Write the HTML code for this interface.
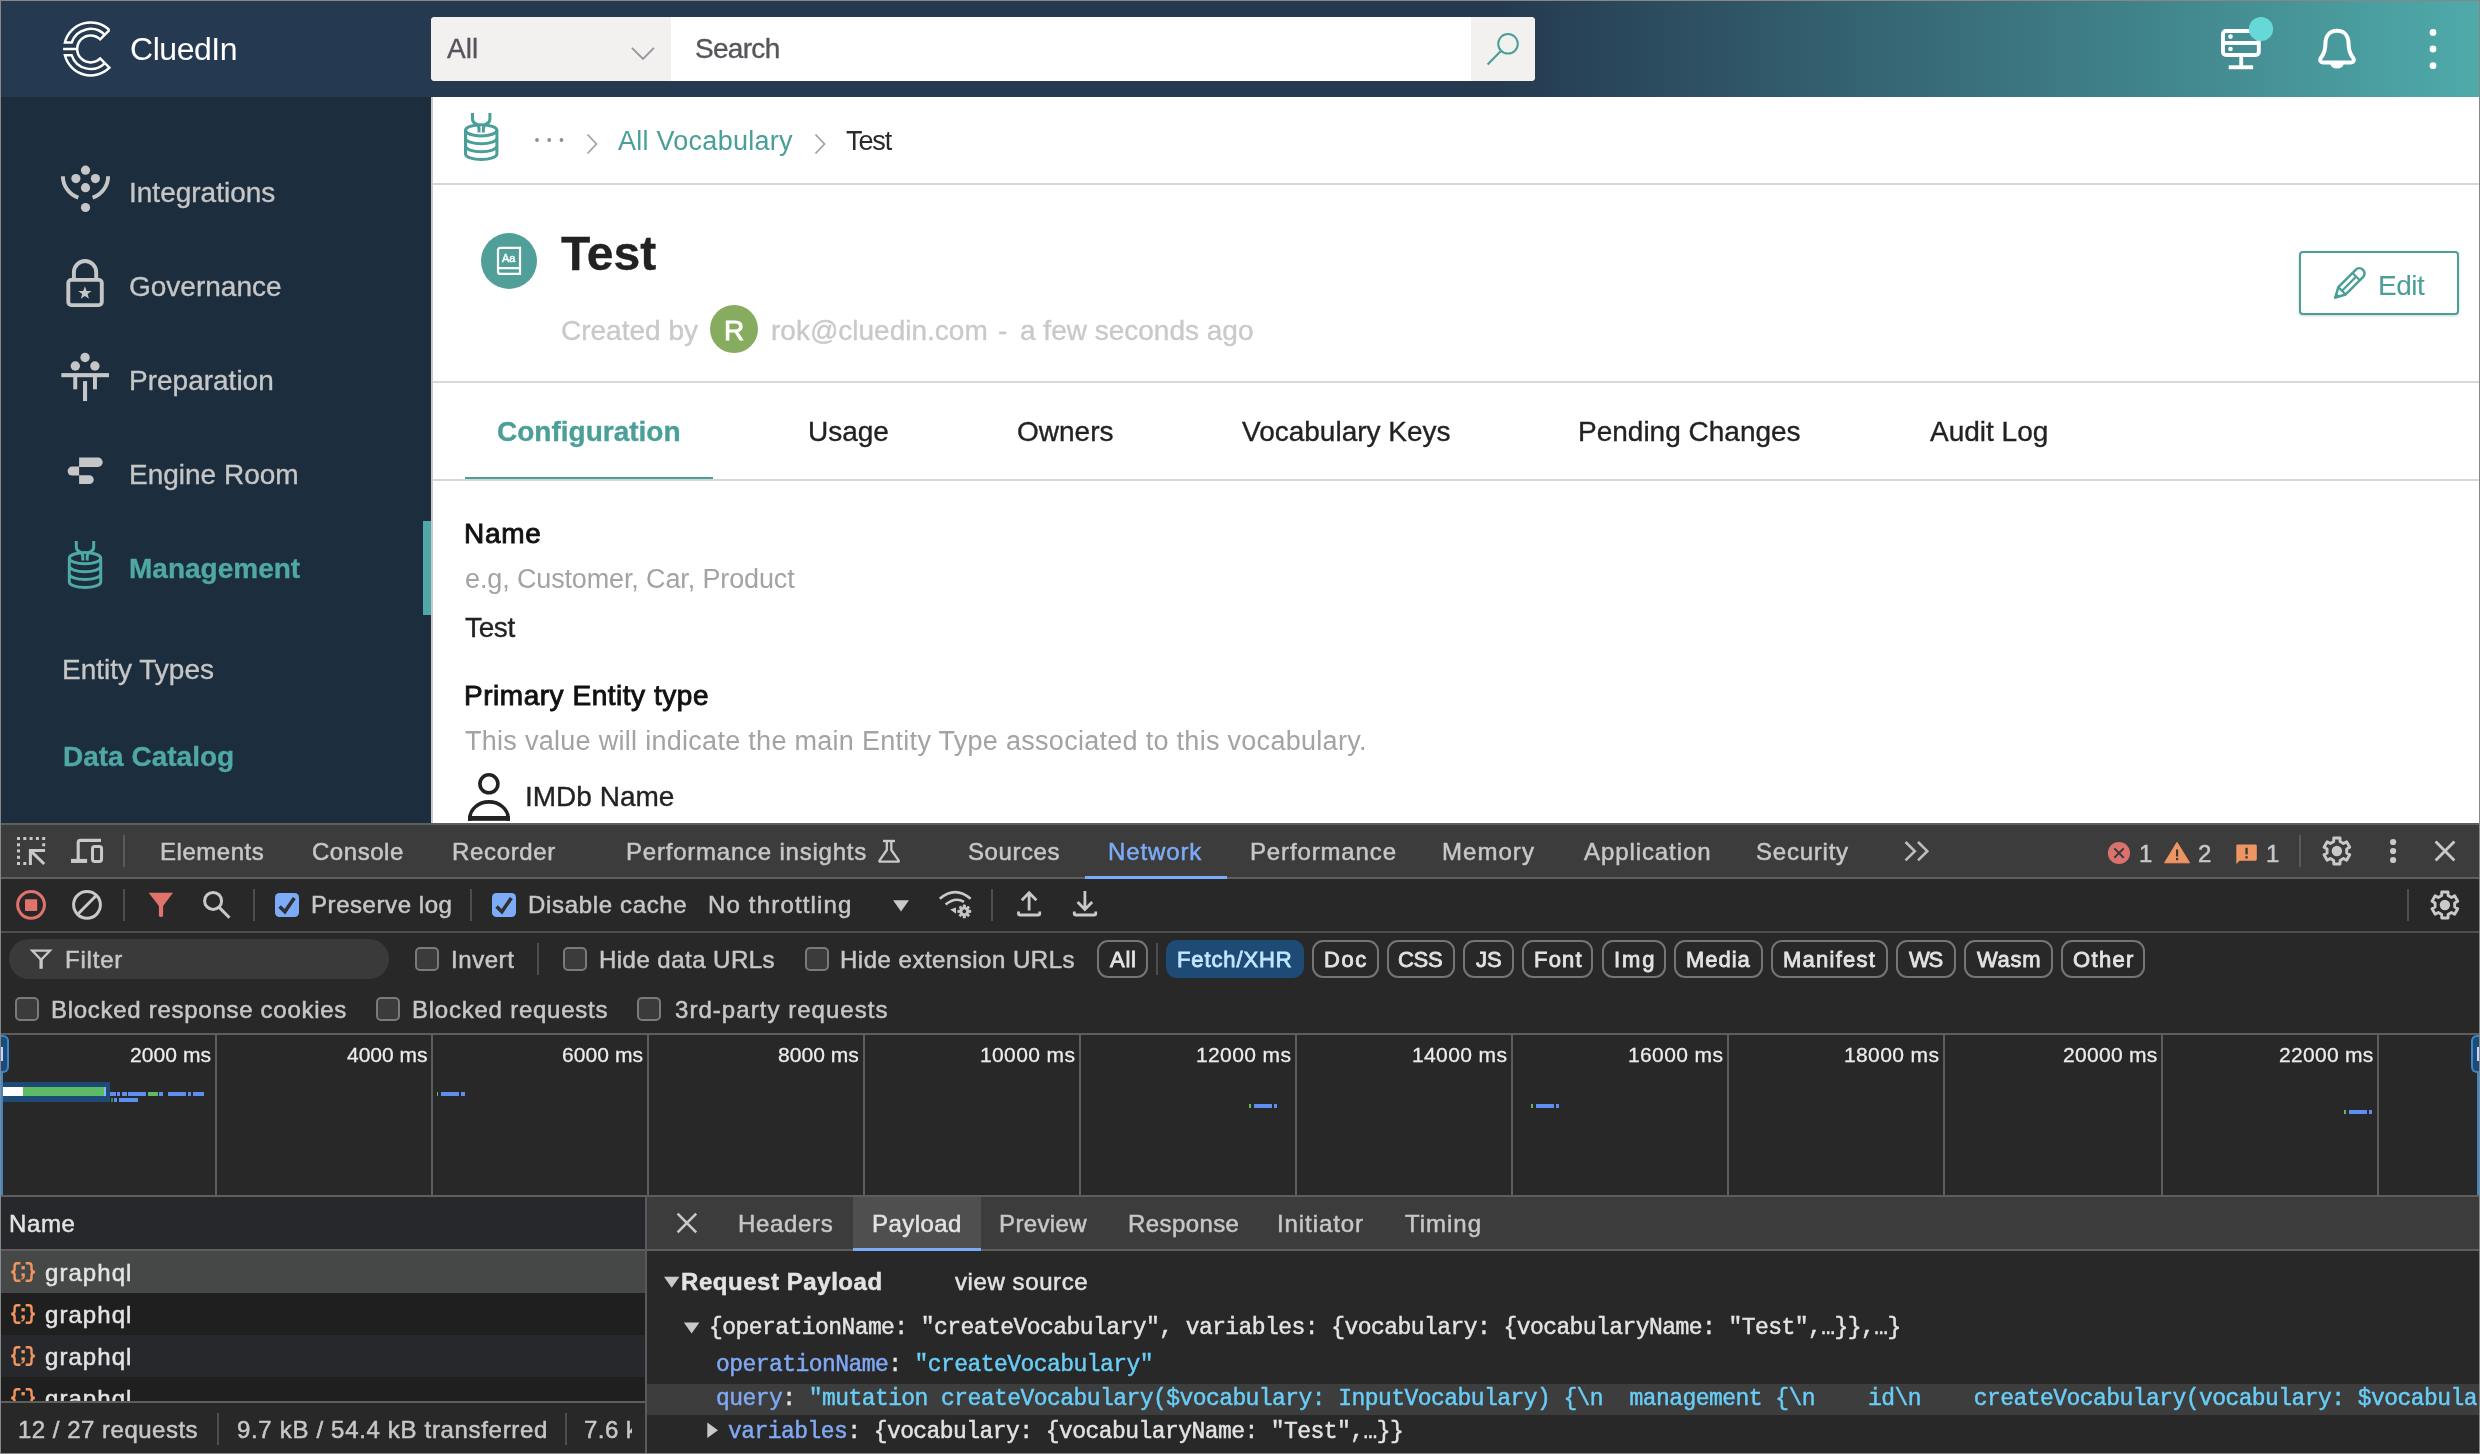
<!DOCTYPE html>
<html><head><meta charset="utf-8"><title>CluedIn</title>
<style>
html,body{margin:0;padding:0;background:#282828;}
body{width:2480px;height:1454px;position:relative;overflow:hidden;font-family:"Liberation Sans",sans-serif;}
.t{position:absolute;white-space:pre;margin:0;padding:0;will-change:transform;}
.b{position:absolute;box-sizing:border-box;}
svg{position:absolute;overflow:visible;}
</style></head><body>
<div class="b" style="left:0px;top:0px;width:2480px;height:1454px;background:#8a8684;"></div>
<div class="b" style="left:0px;top:823px;width:2480px;height:631px;background:#888888;"></div>
<div class="b" style="left:1px;top:1px;width:2478px;height:96px;background:linear-gradient(90deg,#253a50 0,#253a50 1500px,#4faaaa 2478px);"></div>
<div class="b" style="left:1px;top:97px;width:430px;height:726px;background:#1c2d3d;"></div>
<div class="b" style="left:431px;top:97px;width:2048px;height:726px;background:#fff;"></div>
<div class="b" style="left:431px;top:97px;width:2px;height:726px;background:#c9c9c9;"></div>
<div class="b" style="left:431px;top:17px;width:1104px;height:64px;background:#fff;border-radius:4px;overflow:hidden;"></div>
<div class="b" style="left:431px;top:17px;width:240px;height:64px;background:#f2f1f0;border-radius:4px 0 0 4px;"></div>
<div class="b" style="left:1471px;top:17px;width:64px;height:64px;background:#f2f1f0;border-radius:0 4px 4px 0;"></div>
<div class="t " style="left:129.50px;top:33.00px;font-size:32px;line-height:32px;color:#fff;font-family:'Liberation Sans',sans-serif;letter-spacing:-0.457px;-webkit-text-stroke:0.01px #fff;">CluedIn</div>
<div class="t " style="left:446.60px;top:35.00px;font-size:28px;line-height:28px;color:#55555a;font-family:'Liberation Sans',sans-serif;-webkit-text-stroke:0.35px #55555a;">All</div>
<div class="t " style="left:695.04px;top:35.00px;font-size:28px;line-height:28px;color:#55555a;font-family:'Liberation Sans',sans-serif;letter-spacing:-0.696px;-webkit-text-stroke:0.35px #55555a;">Search</div>
<div class="b" style="left:433px;top:183px;width:2046px;height:2px;background:#d6d8d2;"></div>
<div class="t " style="left:618.00px;top:128.00px;font-size:27px;line-height:27px;color:#4a9f98;font-family:'Liberation Sans',sans-serif;letter-spacing:0.261px;-webkit-text-stroke:0.01px #4a9f98;">All Vocabulary</div>
<div class="t " style="left:845.96px;top:128.00px;font-size:27px;line-height:27px;color:#2a2a2a;font-family:'Liberation Sans',sans-serif;letter-spacing:-1.101px;-webkit-text-stroke:0.01px #2a2a2a;">Test</div>
<div class="b" style="left:433px;top:381px;width:2046px;height:2px;background:#d6d8d2;"></div>
<div class="b" style="left:481px;top:233px;width:56px;height:56px;background:#519f99;border-radius:50%;"></div>
<div class="t " style="left:561.04px;top:230.00px;font-size:48px;line-height:48px;color:#222;font-family:'Liberation Sans',sans-serif;font-weight:700;-webkit-text-stroke:0.35px #222;">Test</div>
<div class="t " style="left:561.43px;top:317.00px;font-size:28px;line-height:28px;color:#c9c9c9;font-family:'Liberation Sans',sans-serif;-webkit-text-stroke:0.35px #c9c9c9;">Created by</div>
<div class="b" style="left:710px;top:305px;width:48px;height:48px;background:#87ac5f;border-radius:50%;"></div>
<div class="t " style="left:724.16px;top:317.00px;font-size:28px;line-height:28px;color:#fff;font-family:'Liberation Sans',sans-serif;-webkit-text-stroke:0.9px #fff;">R</div>
<div class="t " style="left:770.69px;top:317.00px;font-size:28px;line-height:28px;color:#c9c9c9;font-family:'Liberation Sans',sans-serif;-webkit-text-stroke:0.35px #c9c9c9;">rok@cluedin.com</div>
<div class="t " style="left:997.56px;top:317.00px;font-size:28px;line-height:28px;color:#c9c9c9;font-family:'Liberation Sans',sans-serif;-webkit-text-stroke:0.35px #c9c9c9;">-</div>
<div class="t " style="left:1020.49px;top:317.00px;font-size:28px;line-height:28px;color:#c9c9c9;font-family:'Liberation Sans',sans-serif;-webkit-text-stroke:0.35px #c9c9c9;">a few seconds ago</div>
<div class="b" style="left:2299px;top:251px;width:160px;height:64px;background:#fff;border:2px solid #4a9f98;border-radius:4px;box-shadow:0 1px 3px rgba(0,0,0,.18);"></div>
<div class="t " style="left:2377.76px;top:272.00px;font-size:28px;line-height:28px;color:#4a9f98;font-family:'Liberation Sans',sans-serif;letter-spacing:-0.517px;-webkit-text-stroke:0.01px #4a9f98;">Edit</div>
<div class="b" style="left:433px;top:479px;width:2046px;height:2px;background:#d6d8d2;"></div>
<div class="b" style="left:465px;top:477px;width:248px;height:2px;background:#4a9f98;"></div>
<div class="t " style="left:497.29px;top:418.00px;font-size:28px;line-height:28px;color:#4a9f98;font-family:'Liberation Sans',sans-serif;font-weight:700;-webkit-text-stroke:0.35px #4a9f98;">Configuration</div>
<div class="t " style="left:808.08px;top:418.00px;font-size:28px;line-height:28px;color:#222;font-family:'Liberation Sans',sans-serif;-webkit-text-stroke:0.35px #222;">Usage</div>
<div class="t " style="left:1017.13px;top:418.00px;font-size:28px;line-height:28px;color:#222;font-family:'Liberation Sans',sans-serif;-webkit-text-stroke:0.35px #222;">Owners</div>
<div class="t " style="left:1242.40px;top:418.00px;font-size:28px;line-height:28px;color:#222;font-family:'Liberation Sans',sans-serif;-webkit-text-stroke:0.35px #222;">Vocabulary Keys</div>
<div class="t " style="left:1578.07px;top:418.00px;font-size:28px;line-height:28px;color:#222;font-family:'Liberation Sans',sans-serif;-webkit-text-stroke:0.35px #222;">Pending Changes</div>
<div class="t " style="left:1930.22px;top:418.00px;font-size:28px;line-height:28px;color:#222;font-family:'Liberation Sans',sans-serif;-webkit-text-stroke:0.35px #222;">Audit Log</div>
<div class="t " style="left:463.76px;top:520.00px;font-size:28px;line-height:28px;color:#111;font-family:'Liberation Sans',sans-serif;letter-spacing:0.747px;-webkit-text-stroke:0.9px #111;">Name</div>
<div class="t " style="left:464.85px;top:566.00px;font-size:27px;line-height:27px;color:#a3a3a3;font-family:'Liberation Sans',sans-serif;letter-spacing:-0.131px;-webkit-text-stroke:0.01px #a3a3a3;">e.g, Customer, Car, Product</div>
<div class="t " style="left:465.44px;top:614.00px;font-size:28px;line-height:28px;color:#222;font-family:'Liberation Sans',sans-serif;letter-spacing:-0.370px;-webkit-text-stroke:0.35px #222;">Test</div>
<div class="t " style="left:463.76px;top:682.00px;font-size:28px;line-height:28px;color:#111;font-family:'Liberation Sans',sans-serif;letter-spacing:0.528px;-webkit-text-stroke:0.9px #111;">Primary Entity type</div>
<div class="t " style="left:465.46px;top:728.00px;font-size:27px;line-height:27px;color:#a3a3a3;font-family:'Liberation Sans',sans-serif;letter-spacing:0.287px;-webkit-text-stroke:0.01px #a3a3a3;">This value will indicate the main Entity Type associated to this vocabulary.</div>
<div class="t " style="left:525.23px;top:783.00px;font-size:28px;line-height:28px;color:#222;font-family:'Liberation Sans',sans-serif;-webkit-text-stroke:0.35px #222;">IMDb Name</div>
<div class="t " style="left:128.58px;top:179.00px;font-size:28px;line-height:28px;color:#c6c6c6;font-family:'Liberation Sans',sans-serif;-webkit-text-stroke:0.35px #c6c6c6;">Integrations</div>
<div class="t " style="left:129.13px;top:273.00px;font-size:28px;line-height:28px;color:#c6c6c6;font-family:'Liberation Sans',sans-serif;-webkit-text-stroke:0.35px #c6c6c6;">Governance</div>
<div class="t " style="left:128.88px;top:367.00px;font-size:28px;line-height:28px;color:#c6c6c6;font-family:'Liberation Sans',sans-serif;-webkit-text-stroke:0.35px #c6c6c6;">Preparation</div>
<div class="t " style="left:128.95px;top:461.00px;font-size:28px;line-height:28px;color:#c6c6c6;font-family:'Liberation Sans',sans-serif;-webkit-text-stroke:0.35px #c6c6c6;">Engine Room</div>
<div class="t " style="left:128.66px;top:555.00px;font-size:28px;line-height:28px;color:#4fa8a5;font-family:'Liberation Sans',sans-serif;font-weight:700;-webkit-text-stroke:0.35px #4fa8a5;">Management</div>
<div class="b" style="left:423px;top:521px;width:8px;height:94px;background:#4fa8a5;"></div>
<div class="t " style="left:62.35px;top:656.00px;font-size:28px;line-height:28px;color:#c6c6c6;font-family:'Liberation Sans',sans-serif;-webkit-text-stroke:0.35px #c6c6c6;">Entity Types</div>
<div class="t " style="left:63.42px;top:743.00px;font-size:28px;line-height:28px;color:#4fa8a5;font-family:'Liberation Sans',sans-serif;font-weight:700;-webkit-text-stroke:0.35px #4fa8a5;">Data Catalog</div>
<div class="b" style="left:1px;top:823px;width:2478px;height:2px;background:#5e5e5e;"></div>
<div class="b" style="left:1px;top:825px;width:2478px;height:52px;background:#3c3c3c;"></div>
<div class="b" style="left:1px;top:877px;width:2478px;height:2px;background:#5e5e5e;"></div>
<div class="b" style="left:1px;top:879px;width:2478px;height:52px;background:#282828;"></div>
<div class="b" style="left:1px;top:931px;width:2478px;height:2px;background:#4e4e4e;"></div>
<div class="b" style="left:1px;top:933px;width:2478px;height:100px;background:#282828;"></div>
<div class="b" style="left:1px;top:1033px;width:2478px;height:2px;background:#5e5e5e;"></div>
<div class="b" style="left:1px;top:1035px;width:2478px;height:160px;background:#282828;"></div>
<div class="b" style="left:1px;top:1195px;width:2478px;height:2px;background:#5e5e5e;"></div>
<div class="t " style="left:159.58px;top:840.00px;font-size:24px;line-height:24px;color:#c7c7c7;font-family:'Liberation Sans',sans-serif;letter-spacing:0.534px;-webkit-text-stroke:0.5px #c7c7c7;">Elements</div>
<div class="t " style="left:312.30px;top:840.00px;font-size:24px;line-height:24px;color:#c7c7c7;font-family:'Liberation Sans',sans-serif;letter-spacing:0.533px;-webkit-text-stroke:0.5px #c7c7c7;">Console</div>
<div class="t " style="left:451.58px;top:840.00px;font-size:24px;line-height:24px;color:#c7c7c7;font-family:'Liberation Sans',sans-serif;letter-spacing:0.654px;-webkit-text-stroke:0.5px #c7c7c7;">Recorder</div>
<div class="t " style="left:625.58px;top:840.00px;font-size:24px;line-height:24px;color:#c7c7c7;font-family:'Liberation Sans',sans-serif;letter-spacing:0.781px;-webkit-text-stroke:0.5px #c7c7c7;">Performance insights</div>
<div class="t " style="left:968.42px;top:840.00px;font-size:24px;line-height:24px;color:#c7c7c7;font-family:'Liberation Sans',sans-serif;letter-spacing:0.567px;-webkit-text-stroke:0.5px #c7c7c7;">Sources</div>
<div class="t " style="left:1249.58px;top:840.00px;font-size:24px;line-height:24px;color:#c7c7c7;font-family:'Liberation Sans',sans-serif;letter-spacing:0.860px;-webkit-text-stroke:0.5px #c7c7c7;">Performance</div>
<div class="t " style="left:1441.58px;top:840.00px;font-size:24px;line-height:24px;color:#c7c7c7;font-family:'Liberation Sans',sans-serif;letter-spacing:1.044px;-webkit-text-stroke:0.5px #c7c7c7;">Memory</div>
<div class="t " style="left:1583.50px;top:840.00px;font-size:24px;line-height:24px;color:#c7c7c7;font-family:'Liberation Sans',sans-serif;letter-spacing:0.914px;-webkit-text-stroke:0.5px #c7c7c7;">Application</div>
<div class="t " style="left:1756.42px;top:840.00px;font-size:24px;line-height:24px;color:#c7c7c7;font-family:'Liberation Sans',sans-serif;letter-spacing:0.769px;-webkit-text-stroke:0.5px #c7c7c7;">Security</div>
<div class="t " style="left:1108.08px;top:840.00px;font-size:24px;line-height:24px;color:#7cacf8;font-family:'Liberation Sans',sans-serif;letter-spacing:0.890px;-webkit-text-stroke:0.5px #7cacf8;">Network</div>
<div class="b" style="left:1085px;top:876px;width:142px;height:3px;background:#7cacf8;"></div>
<div class="b" style="left:123px;top:835px;width:2px;height:32px;background:#5a5a5a;"></div>
<div class="b" style="left:2299px;top:835px;width:2px;height:32px;background:#5a5a5a;"></div>
<div class="t " style="left:2139.30px;top:842.00px;font-size:24px;line-height:24px;color:#c7c7c7;font-family:'Liberation Sans',sans-serif;-webkit-text-stroke:0.5px #c7c7c7;">1</div>
<div class="t " style="left:2198.00px;top:842.00px;font-size:24px;line-height:24px;color:#c7c7c7;font-family:'Liberation Sans',sans-serif;-webkit-text-stroke:0.5px #c7c7c7;">2</div>
<div class="t " style="left:2265.70px;top:842.00px;font-size:24px;line-height:24px;color:#c7c7c7;font-family:'Liberation Sans',sans-serif;-webkit-text-stroke:0.5px #c7c7c7;">1</div>
<div class="t " style="left:311.08px;top:893.00px;font-size:24px;line-height:24px;color:#c7c7c7;font-family:'Liberation Sans',sans-serif;letter-spacing:0.565px;-webkit-text-stroke:0.5px #c7c7c7;">Preserve log</div>
<div class="t " style="left:527.58px;top:893.00px;font-size:24px;line-height:24px;color:#c7c7c7;font-family:'Liberation Sans',sans-serif;letter-spacing:0.664px;-webkit-text-stroke:0.5px #c7c7c7;">Disable cache</div>
<div class="t " style="left:707.58px;top:893.00px;font-size:24px;line-height:24px;color:#c7c7c7;font-family:'Liberation Sans',sans-serif;letter-spacing:1.172px;-webkit-text-stroke:0.5px #c7c7c7;">No throttling</div>
<div class="b" style="left:123px;top:889px;width:2px;height:32px;background:#4e4e4e;"></div>
<div class="b" style="left:253px;top:889px;width:2px;height:32px;background:#4e4e4e;"></div>
<div class="b" style="left:470px;top:889px;width:2px;height:32px;background:#4e4e4e;"></div>
<div class="b" style="left:991px;top:889px;width:2px;height:32px;background:#4e4e4e;"></div>
<div class="b" style="left:2407px;top:889px;width:2px;height:32px;background:#4e4e4e;"></div>
<div class="b" style="left:9px;top:939px;width:380px;height:40px;background:#3a3a3a;border-radius:20px;"></div>
<div class="t " style="left:64.58px;top:948.00px;font-size:24px;line-height:24px;color:#c7c7c7;font-family:'Liberation Sans',sans-serif;letter-spacing:0.788px;-webkit-text-stroke:0.5px #c7c7c7;">Filter</div>
<div class="t " style="left:450.84px;top:948.00px;font-size:24px;line-height:24px;color:#c7c7c7;font-family:'Liberation Sans',sans-serif;letter-spacing:0.556px;-webkit-text-stroke:0.5px #c7c7c7;">Invert</div>
<div class="t " style="left:598.58px;top:948.00px;font-size:24px;line-height:24px;color:#c7c7c7;font-family:'Liberation Sans',sans-serif;letter-spacing:0.467px;-webkit-text-stroke:0.5px #c7c7c7;">Hide data URLs</div>
<div class="t " style="left:839.58px;top:948.00px;font-size:24px;line-height:24px;color:#c7c7c7;font-family:'Liberation Sans',sans-serif;letter-spacing:0.502px;-webkit-text-stroke:0.5px #c7c7c7;">Hide extension URLs</div>
<div class="b" style="left:536.5px;top:943px;width:2px;height:32px;background:#4e4e4e;"></div>
<div class="b" style="left:1155.5px;top:943px;width:2px;height:32px;background:#4e4e4e;"></div>
<div class="b" style="left:415px;top:947px;width:24px;height:24px;background:#3b3b3b;border:2px solid #7a7a7a;border-radius:5px;"></div>
<div class="b" style="left:563px;top:947px;width:24px;height:24px;background:#3b3b3b;border:2px solid #7a7a7a;border-radius:5px;"></div>
<div class="b" style="left:805px;top:947px;width:24px;height:24px;background:#3b3b3b;border:2px solid #7a7a7a;border-radius:5px;"></div>
<div class="b" style="left:15px;top:997px;width:24px;height:24px;background:#3b3b3b;border:2px solid #7a7a7a;border-radius:5px;"></div>
<div class="b" style="left:376px;top:997px;width:24px;height:24px;background:#3b3b3b;border:2px solid #7a7a7a;border-radius:5px;"></div>
<div class="b" style="left:637px;top:997px;width:24px;height:24px;background:#3b3b3b;border:2px solid #7a7a7a;border-radius:5px;"></div>
<div class="b" style="left:1097px;top:940px;width:50.5px;height:38px;background:transparent;border:2px solid #757575;border-radius:11px;"></div>
<div class="t " style="left:1110.00px;top:949.00px;font-size:22px;line-height:22px;color:#e3e3e3;font-family:'Liberation Sans',sans-serif;letter-spacing:0.727px;-webkit-text-stroke:0.8px #e3e3e3;">All</div>
<div class="b" style="left:1166px;top:940px;width:138px;height:38px;background:#1e4a76;border-radius:11px;"></div>
<div class="t " style="left:1177.49px;top:949.00px;font-size:22px;line-height:22px;color:#c2e7ff;font-family:'Liberation Sans',sans-serif;letter-spacing:0.896px;-webkit-text-stroke:0.8px #c2e7ff;">Fetch/XHR</div>
<div class="b" style="left:1312px;top:940px;width:67px;height:38px;background:transparent;border:2px solid #757575;border-radius:11px;"></div>
<div class="t " style="left:1323.74px;top:949.00px;font-size:22px;line-height:22px;color:#e3e3e3;font-family:'Liberation Sans',sans-serif;letter-spacing:1.602px;-webkit-text-stroke:0.8px #e3e3e3;">Doc</div>
<div class="b" style="left:1387px;top:940px;width:67.5px;height:38px;background:transparent;border:2px solid #757575;border-radius:11px;"></div>
<div class="t " style="left:1398.40px;top:949.00px;font-size:22px;line-height:22px;color:#e3e3e3;font-family:'Liberation Sans',sans-serif;letter-spacing:-0.337px;-webkit-text-stroke:0.8px #e3e3e3;">CSS</div>
<div class="b" style="left:1463px;top:940px;width:51px;height:38px;background:transparent;border:2px solid #757575;border-radius:11px;"></div>
<div class="t " style="left:1475.92px;top:949.00px;font-size:22px;line-height:22px;color:#e3e3e3;font-family:'Liberation Sans',sans-serif;letter-spacing:-0.115px;-webkit-text-stroke:0.8px #e3e3e3;">JS</div>
<div class="b" style="left:1522px;top:940px;width:71px;height:38px;background:transparent;border:2px solid #757575;border-radius:11px;"></div>
<div class="t " style="left:1533.74px;top:949.00px;font-size:22px;line-height:22px;color:#e3e3e3;font-family:'Liberation Sans',sans-serif;letter-spacing:1.207px;-webkit-text-stroke:0.8px #e3e3e3;">Font</div>
<div class="b" style="left:1602px;top:940px;width:63.5px;height:38px;background:transparent;border:2px solid #757575;border-radius:11px;"></div>
<div class="t " style="left:1613.52px;top:949.00px;font-size:22px;line-height:22px;color:#e3e3e3;font-family:'Liberation Sans',sans-serif;letter-spacing:1.863px;-webkit-text-stroke:0.8px #e3e3e3;">Img</div>
<div class="b" style="left:1674px;top:940px;width:88.5px;height:38px;background:transparent;border:2px solid #757575;border-radius:11px;"></div>
<div class="t " style="left:1685.74px;top:949.00px;font-size:22px;line-height:22px;color:#e3e3e3;font-family:'Liberation Sans',sans-serif;letter-spacing:0.953px;-webkit-text-stroke:0.8px #e3e3e3;">Media</div>
<div class="b" style="left:1771px;top:940px;width:116.5px;height:38px;background:transparent;border:2px solid #757575;border-radius:11px;"></div>
<div class="t " style="left:1782.74px;top:949.00px;font-size:22px;line-height:22px;color:#e3e3e3;font-family:'Liberation Sans',sans-serif;letter-spacing:1.244px;-webkit-text-stroke:0.8px #e3e3e3;">Manifest</div>
<div class="b" style="left:1896px;top:940px;width:60px;height:38px;background:transparent;border:2px solid #757575;border-radius:11px;"></div>
<div class="t " style="left:1909.19px;top:949.00px;font-size:22px;line-height:22px;color:#e3e3e3;font-family:'Liberation Sans',sans-serif;letter-spacing:-1.180px;-webkit-text-stroke:0.8px #e3e3e3;">WS</div>
<div class="b" style="left:1964px;top:940px;width:88.5px;height:38px;background:transparent;border:2px solid #757575;border-radius:11px;"></div>
<div class="t " style="left:1977.44px;top:949.00px;font-size:22px;line-height:22px;color:#e3e3e3;font-family:'Liberation Sans',sans-serif;letter-spacing:0.665px;-webkit-text-stroke:0.8px #e3e3e3;">Wasm</div>
<div class="b" style="left:2061px;top:940px;width:84px;height:38px;background:transparent;border:2px solid #757575;border-radius:11px;"></div>
<div class="t " style="left:2072.51px;top:949.00px;font-size:22px;line-height:22px;color:#e3e3e3;font-family:'Liberation Sans',sans-serif;letter-spacing:1.330px;-webkit-text-stroke:0.8px #e3e3e3;">Other</div>
<div class="t " style="left:50.58px;top:998.00px;font-size:24px;line-height:24px;color:#c7c7c7;font-family:'Liberation Sans',sans-serif;letter-spacing:0.715px;-webkit-text-stroke:0.5px #c7c7c7;">Blocked response cookies</div>
<div class="t " style="left:411.58px;top:998.00px;font-size:24px;line-height:24px;color:#c7c7c7;font-family:'Liberation Sans',sans-serif;letter-spacing:0.762px;-webkit-text-stroke:0.5px #c7c7c7;">Blocked requests</div>
<div class="t " style="left:674.60px;top:998.00px;font-size:24px;line-height:24px;color:#c7c7c7;font-family:'Liberation Sans',sans-serif;letter-spacing:1.043px;-webkit-text-stroke:0.5px #c7c7c7;">3rd-party requests</div>
<div class="b" style="left:215px;top:1035px;width:2px;height:160px;background:#5c5c5c;"></div>
<div class="t " style="left:130.15px;top:1044.00px;font-size:21px;line-height:21px;color:#ececec;font-family:'Liberation Sans',sans-serif;letter-spacing:0.075px;-webkit-text-stroke:0.3px #ececec;">2000 ms</div>
<div class="b" style="left:431px;top:1035px;width:2px;height:160px;background:#5c5c5c;"></div>
<div class="t " style="left:346.73px;top:1044.00px;font-size:21px;line-height:21px;color:#ececec;font-family:'Liberation Sans',sans-serif;letter-spacing:-0.021px;-webkit-text-stroke:0.3px #ececec;">4000 ms</div>
<div class="b" style="left:647px;top:1035px;width:2px;height:160px;background:#5c5c5c;"></div>
<div class="t " style="left:562.15px;top:1044.00px;font-size:21px;line-height:21px;color:#ececec;font-family:'Liberation Sans',sans-serif;letter-spacing:0.075px;-webkit-text-stroke:0.3px #ececec;">6000 ms</div>
<div class="b" style="left:863px;top:1035px;width:2px;height:160px;background:#5c5c5c;"></div>
<div class="t " style="left:778.31px;top:1044.00px;font-size:21px;line-height:21px;color:#ececec;font-family:'Liberation Sans',sans-serif;letter-spacing:0.049px;-webkit-text-stroke:0.3px #ececec;">8000 ms</div>
<div class="b" style="left:1079px;top:1035px;width:2px;height:160px;background:#5c5c5c;"></div>
<div class="t " style="left:980.23px;top:1044.00px;font-size:21px;line-height:21px;color:#ececec;font-family:'Liberation Sans',sans-serif;letter-spacing:0.381px;-webkit-text-stroke:0.3px #ececec;">10000 ms</div>
<div class="b" style="left:1295px;top:1035px;width:2px;height:160px;background:#5c5c5c;"></div>
<div class="t " style="left:1196.23px;top:1044.00px;font-size:21px;line-height:21px;color:#ececec;font-family:'Liberation Sans',sans-serif;letter-spacing:0.381px;-webkit-text-stroke:0.3px #ececec;">12000 ms</div>
<div class="b" style="left:1511px;top:1035px;width:2px;height:160px;background:#5c5c5c;"></div>
<div class="t " style="left:1412.23px;top:1044.00px;font-size:21px;line-height:21px;color:#ececec;font-family:'Liberation Sans',sans-serif;letter-spacing:0.381px;-webkit-text-stroke:0.3px #ececec;">14000 ms</div>
<div class="b" style="left:1727px;top:1035px;width:2px;height:160px;background:#5c5c5c;"></div>
<div class="t " style="left:1628.23px;top:1044.00px;font-size:21px;line-height:21px;color:#ececec;font-family:'Liberation Sans',sans-serif;letter-spacing:0.381px;-webkit-text-stroke:0.3px #ececec;">16000 ms</div>
<div class="b" style="left:1943px;top:1035px;width:2px;height:160px;background:#5c5c5c;"></div>
<div class="t " style="left:1844.23px;top:1044.00px;font-size:21px;line-height:21px;color:#ececec;font-family:'Liberation Sans',sans-serif;letter-spacing:0.381px;-webkit-text-stroke:0.3px #ececec;">18000 ms</div>
<div class="b" style="left:2161px;top:1035px;width:2px;height:160px;background:#5c5c5c;"></div>
<div class="t " style="left:2062.75px;top:1044.00px;font-size:21px;line-height:21px;color:#ececec;font-family:'Liberation Sans',sans-serif;letter-spacing:0.306px;-webkit-text-stroke:0.3px #ececec;">20000 ms</div>
<div class="b" style="left:2377px;top:1035px;width:2px;height:160px;background:#5c5c5c;"></div>
<div class="t " style="left:2278.75px;top:1044.00px;font-size:21px;line-height:21px;color:#ececec;font-family:'Liberation Sans',sans-serif;letter-spacing:0.306px;-webkit-text-stroke:0.3px #ececec;">22000 ms</div>
<div class="b" style="left:2px;top:1082px;width:108px;height:20px;background:#1e4a76;"></div>
<div class="b" style="left:3px;top:1087px;width:20px;height:9px;background:#fff;"></div>
<div class="b" style="left:23px;top:1087px;width:81px;height:9px;background:#5dbb67;"></div>
<div class="b" style="left:104px;top:1087px;width:2px;height:9px;background:#8ab4ff;"></div>
<div class="b" style="left:110px;top:1092px;width:5.5px;height:4px;background:#5e8ff0;"></div>
<div class="b" style="left:117px;top:1092px;width:3px;height:4px;background:#5e8ff0;"></div>
<div class="b" style="left:122px;top:1092px;width:4.5px;height:4px;background:#5e8ff0;"></div>
<div class="b" style="left:128px;top:1092px;width:18px;height:4px;background:#5e8ff0;"></div>
<div class="b" style="left:148px;top:1092px;width:9.599999999999994px;height:4px;background:#5dbb67;"></div>
<div class="b" style="left:159px;top:1092px;width:4px;height:4px;background:#5e8ff0;"></div>
<div class="b" style="left:167.5px;top:1092px;width:18.0px;height:4px;background:#5e8ff0;"></div>
<div class="b" style="left:187.5px;top:1092px;width:3.5px;height:4px;background:#5e8ff0;"></div>
<div class="b" style="left:192.5px;top:1092px;width:11.099999999999994px;height:4px;background:#5e8ff0;"></div>
<div class="b" style="left:110.5px;top:1098px;width:2.5px;height:4px;background:#3f8a4a;"></div>
<div class="b" style="left:114px;top:1098px;width:3px;height:4px;background:#5e8ff0;"></div>
<div class="b" style="left:119px;top:1098px;width:18.69999999999999px;height:4px;background:#5e8ff0;"></div>
<div class="b" style="left:436.5px;top:1092px;width:1.5px;height:4px;background:#5dbb67;"></div>
<div class="b" style="left:441.0px;top:1092px;width:18px;height:4px;background:#5e8ff0;"></div>
<div class="b" style="left:461.0px;top:1092px;width:3.5px;height:4px;background:#5e8ff0;"></div>
<div class="b" style="left:1249px;top:1104px;width:1.5px;height:4px;background:#5dbb67;"></div>
<div class="b" style="left:1253.5px;top:1104px;width:18px;height:4px;background:#5e8ff0;"></div>
<div class="b" style="left:1273.5px;top:1104px;width:3.5px;height:4px;background:#5e8ff0;"></div>
<div class="b" style="left:1531px;top:1104px;width:1.5px;height:4px;background:#5dbb67;"></div>
<div class="b" style="left:1535.5px;top:1104px;width:18px;height:4px;background:#5e8ff0;"></div>
<div class="b" style="left:1555.5px;top:1104px;width:3.5px;height:4px;background:#5e8ff0;"></div>
<div class="b" style="left:2344px;top:1110px;width:1.5px;height:4px;background:#5dbb67;"></div>
<div class="b" style="left:2348.5px;top:1110px;width:18px;height:4px;background:#5e8ff0;"></div>
<div class="b" style="left:2368.5px;top:1110px;width:3.5px;height:4px;background:#5e8ff0;"></div>
<div class="b" style="left:1px;top:1035px;width:8px;height:38px;background:#1d4b78;border:2px solid #3d87c8;border-left:none;border-radius:0 6px 6px 0;"></div>
<div class="b" style="left:1px;top:1073px;width:2px;height:122px;background:#3d87c8;"></div>
<div class="b" style="left:1px;top:1047px;width:2px;height:14px;background:#c3d9ff;"></div>
<div class="b" style="left:2471px;top:1035px;width:8px;height:38px;background:#1d4b78;border:2px solid #3d87c8;border-right:none;border-radius:6px 0 0 6px;"></div>
<div class="b" style="left:2477px;top:1073px;width:2px;height:122px;background:#3d87c8;"></div>
<div class="b" style="left:2477px;top:1047px;width:2px;height:14px;background:#c3d9ff;"></div>
<div class="b" style="left:1px;top:1197px;width:644px;height:52px;background:#27282b;"></div>
<div class="b" style="left:1px;top:1249px;width:644px;height:2px;background:#5e5e5e;"></div>
<div class="t " style="left:8.58px;top:1212.00px;font-size:24px;line-height:24px;color:#e3e3e3;font-family:'Liberation Sans',sans-serif;letter-spacing:0.640px;-webkit-text-stroke:0.5px #e3e3e3;">Name</div>
<div class="b" style="left:1px;top:1251px;width:644px;height:42px;background:#464747;"></div>
<div class="b" style="left:1px;top:1293px;width:644px;height:42px;background:#1f1f1f;"></div>
<div class="b" style="left:1px;top:1335px;width:644px;height:42px;background:#27282b;"></div>
<div class="b" style="left:1px;top:1377px;width:644px;height:25px;background:#1f1f1f;"></div>
<div class="b" style="left:1px;top:1251px;width:644px;height:150px;overflow:hidden;">
<div class="t " style="left:44.34px;top:10.00px;font-size:24px;line-height:24px;color:#e3e3e3;font-family:'Liberation Sans',sans-serif;letter-spacing:1.062px;-webkit-text-stroke:0.5px #e3e3e3;">graphql</div>
<div class="t " style="left:44.34px;top:52.00px;font-size:24px;line-height:24px;color:#e3e3e3;font-family:'Liberation Sans',sans-serif;letter-spacing:1.062px;-webkit-text-stroke:0.5px #e3e3e3;">graphql</div>
<div class="t " style="left:44.34px;top:94.00px;font-size:24px;line-height:24px;color:#e3e3e3;font-family:'Liberation Sans',sans-serif;letter-spacing:1.062px;-webkit-text-stroke:0.5px #e3e3e3;">graphql</div>
<div class="t " style="left:44.34px;top:136.00px;font-size:24px;line-height:24px;color:#e3e3e3;font-family:'Liberation Sans',sans-serif;letter-spacing:1.062px;-webkit-text-stroke:0.5px #e3e3e3;">graphql</div>
</div>
<div class="b" style="left:1px;top:1401px;width:644px;height:2px;background:#5e5e5e;"></div>
<div class="b" style="left:1px;top:1403px;width:644px;height:50px;background:#282828;"></div>
<div class="b" style="left:1px;top:1403px;width:631px;height:49px;overflow:hidden;">
<div class="t " style="left:17.20px;top:15.00px;font-size:24px;line-height:24px;color:#c7c7c7;font-family:'Liberation Sans',sans-serif;letter-spacing:0.500px;-webkit-text-stroke:0.5px #c7c7c7;">12 / 27 requests</div>
<div class="t " style="left:235.92px;top:15.00px;font-size:24px;line-height:24px;color:#c7c7c7;font-family:'Liberation Sans',sans-serif;letter-spacing:0.674px;-webkit-text-stroke:0.5px #c7c7c7;">9.7 kB / 54.4 kB transferred</div>
<div class="t " style="left:582.80px;top:15.00px;font-size:24px;line-height:24px;color:#c7c7c7;font-family:'Liberation Sans',sans-serif;letter-spacing:0.450px;-webkit-text-stroke:0.5px #c7c7c7;">7.6 kB / 52.1 kB resources</div>
</div>
<div class="b" style="left:217px;top:1413px;width:2px;height:32px;background:#4e4e4e;"></div>
<div class="b" style="left:565px;top:1413px;width:2px;height:32px;background:#4e4e4e;"></div>
<div class="b" style="left:645px;top:1197px;width:2px;height:256px;background:#5a5a5a;"></div>
<div class="b" style="left:647px;top:1197px;width:1832px;height:52px;background:#3c3c3c;"></div>
<div class="b" style="left:853px;top:1197px;width:128px;height:52px;background:#4f4f4f;"></div>
<div class="b" style="left:647px;top:1249px;width:1832px;height:2px;background:#5e5e5e;"></div>
<div class="b" style="left:853px;top:1248px;width:128px;height:3px;background:#7cacf8;"></div>
<div class="t " style="left:737.58px;top:1212.00px;font-size:24px;line-height:24px;color:#c7c7c7;font-family:'Liberation Sans',sans-serif;letter-spacing:0.673px;-webkit-text-stroke:0.5px #c7c7c7;">Headers</div>
<div class="t " style="left:871.58px;top:1212.00px;font-size:24px;line-height:24px;color:#e3e3e3;font-family:'Liberation Sans',sans-serif;letter-spacing:0.453px;-webkit-text-stroke:0.5px #e3e3e3;">Payload</div>
<div class="t " style="left:999.33px;top:1212.00px;font-size:24px;line-height:24px;color:#c7c7c7;font-family:'Liberation Sans',sans-serif;letter-spacing:0.372px;-webkit-text-stroke:0.5px #c7c7c7;">Preview</div>
<div class="t " style="left:1127.58px;top:1212.00px;font-size:24px;line-height:24px;color:#c7c7c7;font-family:'Liberation Sans',sans-serif;letter-spacing:0.411px;-webkit-text-stroke:0.5px #c7c7c7;">Response</div>
<div class="t " style="left:1277.34px;top:1212.00px;font-size:24px;line-height:24px;color:#c7c7c7;font-family:'Liberation Sans',sans-serif;letter-spacing:0.912px;-webkit-text-stroke:0.5px #c7c7c7;">Initiator</div>
<div class="t " style="left:1405.02px;top:1212.00px;font-size:24px;line-height:24px;color:#c7c7c7;font-family:'Liberation Sans',sans-serif;letter-spacing:0.976px;-webkit-text-stroke:0.5px #c7c7c7;">Timing</div>
<div class="b" style="left:647px;top:1251px;width:1832px;height:202px;background:#282828;"></div>
<div class="t " style="left:680.94px;top:1270.00px;font-size:24px;line-height:24px;color:#e3e3e3;font-family:'Liberation Sans',sans-serif;font-weight:700;letter-spacing:0.553px;-webkit-text-stroke:0.5px #e3e3e3;">Request Payload</div>
<div class="t " style="left:955.44px;top:1270.00px;font-size:24px;line-height:24px;color:#e3e3e3;font-family:'Liberation Sans',sans-serif;letter-spacing:0.586px;-webkit-text-stroke:0.5px #e3e3e3;">view source</div>
<div class="b" style="left:647px;top:1384px;width:1832px;height:31px;background:#3d3d3d;"></div>
<div class="b" style="left:647px;top:1251px;width:1831px;height:201px;overflow:hidden;">
<div class="t" style="left:61.75px;top:66.00px;font-size:23px;line-height:23px;letter-spacing:-0.562px;font-family:'Liberation Mono',monospace;-webkit-text-stroke:0.45px;"><span style="color:#e3e3e3">{operationName: &quot;createVocabulary&quot;, variables: {vocabulary: {vocabularyName: &quot;Test&quot;,…}},…}</span></div>
<div class="t" style="left:69.00px;top:103.00px;font-size:23px;line-height:23px;letter-spacing:-0.562px;font-family:'Liberation Mono',monospace;-webkit-text-stroke:0.45px;"><span style="color:#80a9f5">operationName</span><span style="color:#e3e3e3">: </span><span style="color:#68cdf7">&quot;createVocabulary&quot;</span></div>
<div class="t" style="left:69.00px;top:137.00px;font-size:23px;line-height:23px;letter-spacing:-0.562px;font-family:'Liberation Mono',monospace;-webkit-text-stroke:0.45px;"><span style="color:#80a9f5">query</span><span style="color:#e3e3e3">: </span><span style="color:#68cdf7">&quot;mutation createVocabulary($vocabulary: InputVocabulary) {\n  management {\n    id\n    createVocabulary(vocabulary: $vocabulary) {\n      ...Vocabulary\n    }\n  }\n}&quot;</span></div>
<div class="t" style="left:81.00px;top:170.00px;font-size:23px;line-height:23px;letter-spacing:-0.562px;font-family:'Liberation Mono',monospace;-webkit-text-stroke:0.45px;"><span style="color:#80a9f5">variables</span><span style="color:#e3e3e3">: {vocabulary: {vocabularyName: &quot;Test&quot;,…}}</span></div>
</div>
<svg style="left:0;top:0" width="2480" height="1454" viewBox="0 0 2480 1454"><path d="M109.40,30.16 A26.5,26.5 0 0 0 64.94,42.50 L71.71,42.50 A20.0,20.0 0 0 1 104.80,34.76 M109.40,30.16 L100.21,39.35 A13.5,13.5 0 1 0 100.21,58.45 L109.40,67.64 A26.5,26.5 0 0 1 64.94,55.30 L71.71,55.30 A20.0,20.0 0 0 0 104.80,63.04 M63.1,48.9 L77.16,48.9" fill="none" stroke="#fff" stroke-width="2.5" stroke-linejoin="miter"/><circle cx="85.5" cy="170.2" r="4.6" fill="#c6c6c6"/><circle cx="75.9" cy="178.6" r="4.6" fill="#c6c6c6"/><circle cx="95.4" cy="178.6" r="4.6" fill="#c6c6c6"/><circle cx="85.5" cy="187.7" r="4.6" fill="#c6c6c6"/><circle cx="85.5" cy="207.5" r="4.6" fill="#c6c6c6"/><path d="M62.90,176.2 A22.6,22.6 0 0 0 78.37,197.64" fill="none" stroke="#c6c6c6" stroke-width="3.9" /><path d="M108.10,176.2 A22.6,22.6 0 0 1 92.63,197.64" fill="none" stroke="#c6c6c6" stroke-width="3.9" /><rect x="68.3" y="279.9" width="33.5" height="25.2" rx="3" fill="none" stroke="#c6c6c6" stroke-width="3.9"/><path d="M73.9,279.9 L73.9,272.2 A11.15,11.15 0 0 1 96.2,272.2 L96.2,279.9" fill="none" stroke="#c6c6c6" stroke-width="3.9" /><path d="M84.90,286.20 L86.55,290.93 L91.56,291.04 L87.56,294.07 L89.01,298.86 L84.90,296.00 L80.79,298.86 L82.24,294.07 L78.24,291.04 L83.25,290.93Z" fill="#c6c6c6" /><circle cx="85.05" cy="357.5" r="4.7" fill="#c6c6c6"/><circle cx="75.3" cy="366.05" r="4.7" fill="#c6c6c6"/><circle cx="94.9" cy="366.05" r="4.7" fill="#c6c6c6"/><rect x="61.3" y="373.1" width="47.7" height="4.1" rx="0" fill="#c6c6c6"/><rect x="73.25" y="377" width="3.95" height="12.3" rx="0" fill="#c6c6c6"/><rect x="93" y="377" width="3.95" height="12.3" rx="0" fill="#c6c6c6"/><rect x="83" y="381.1" width="4.1" height="19.95" rx="0" fill="#c6c6c6"/><path d="M79.1,457.5 L98,457.5 A4.7,4.7 0 0 1 98,466.9 L79.1,466.9Z" fill="#c6c6c6" /><path d="M79.1,466.6 L72.1,466.6 A4.5,4.5 0 0 0 72.1,475.6 L79.1,475.6Z" fill="#c6c6c6" /><path d="M79.1,475.3 L89.4,475.3 A4.35,4.35 0 0 1 89.4,484 L79.1,484Z" fill="#c6c6c6" /><g transform="translate(0,0)"><ellipse cx="85" cy="558.2" rx="15.700000000000003" ry="5.6" fill="none" stroke="#4fa9a6" stroke-width="3"/><path d="M69.3,558.2 L69.3,581.9 A15.700000000000003,5.6 0 0 0 100.7,581.9 L100.7,558.2" fill="none" stroke="#4fa9a6" stroke-width="3"/><path d="M69.3,566.1 A15.700000000000003,5.6 0 0 0 100.7,566.1" fill="none" stroke="#4fa9a6" stroke-width="3"/><path d="M69.3,574.0 A15.700000000000003,5.6 0 0 0 100.7,574.0" fill="none" stroke="#4fa9a6" stroke-width="3"/><path d="M76.3,540.9 L76.3,547 Q76.3,550.3 79.5,551.6 Q82.8,553 82.8,556.5 L82.8,560.4 M93.7,540.9 L93.7,547 Q93.7,550.3 90.5,551.6 Q87.2,553 87.2,556.5 L87.2,560.4" fill="none" stroke="#4fa9a6" stroke-width="3"/></g><g transform="translate(396.2,-427.9)"><ellipse cx="85" cy="558.2" rx="15.700000000000003" ry="5.6" fill="none" stroke="#4a9f98" stroke-width="3"/><path d="M69.3,558.2 L69.3,581.9 A15.700000000000003,5.6 0 0 0 100.7,581.9 L100.7,558.2" fill="none" stroke="#4a9f98" stroke-width="3"/><path d="M69.3,566.1 A15.700000000000003,5.6 0 0 0 100.7,566.1" fill="none" stroke="#4a9f98" stroke-width="3"/><path d="M69.3,574.0 A15.700000000000003,5.6 0 0 0 100.7,574.0" fill="none" stroke="#4a9f98" stroke-width="3"/><path d="M76.3,540.9 L76.3,547 Q76.3,550.3 79.5,551.6 Q82.8,553 82.8,556.5 L82.8,560.4 M93.7,540.9 L93.7,547 Q93.7,550.3 90.5,551.6 Q87.2,553 87.2,556.5 L87.2,560.4" fill="none" stroke="#4a9f98" stroke-width="3"/></g><circle cx="537" cy="140" r="1.9" fill="#8e8e8e"/><circle cx="549.2" cy="140" r="1.9" fill="#8e8e8e"/><circle cx="561.5" cy="140" r="1.9" fill="#8e8e8e"/><path d="M587.5,134.5 L596.5,144 L587.5,153.5" fill="none" stroke="#a0a0a0" stroke-width="1.7" /><path d="M815.5,134.5 L824.5,144 L815.5,153.5" fill="none" stroke="#a0a0a0" stroke-width="1.7" /><path d="M631.9,47.85 L643,59 L653.9,47.85" fill="none" stroke="#97979c" stroke-width="1.9" /><circle cx="1508" cy="43.8" r="9.8" fill="none" stroke="#4a9f98" stroke-width="2"/><path d="M1500.9,51 L1487.6,64.5" fill="none" stroke="#4a9f98" stroke-width="2.2" /><path d="M521,247.9 L500.5,247.9 Q498,247.9 498,250.4 L498,271.4 Q498,273.9 500.5,273.9 L521,273.9 M498.6,268.1 L520,268.1" fill="none" stroke="#fff" stroke-width="2.2" /><path d="M520,246.8 L520,275" fill="none" stroke="#fff" stroke-width="2.2" /><g transform="translate(2334.6,298.2) rotate(-45)" fill="none" stroke="#4a9f98" stroke-width="2.5" stroke-linejoin="round"><path d="M1,0 L10.5,-5.2 L35,-5.2 A5.2,5.2 0 0 1 35,5.2 L10.5,5.2 Z"/><path d="M10.5,-5.2 L10.5,5.2 M10.5,0 L30.5,0 M30.5,-5.2 L30.5,5.2" stroke-width="2.2"/><path d="M0,0 L4.5,-2.5 L4.5,2.5Z" fill="#4a9f98" stroke-width="1"/></g><circle cx="488.9" cy="783.8" r="9" fill="none" stroke="#222" stroke-width="3.6"/><path d="M469.8,820.8 L469.8,818.5 A19.2,16.6 0 0 1 508.2,818.5 L508.2,820.8" fill="none" stroke="#222" stroke-width="3.6" /><rect x="468" y="816" width="42" height="4.8" rx="0" fill="#222"/><rect x="2223" y="31" width="35.8" height="24" rx="3" fill="none" stroke="#fff" stroke-width="3.9"/><rect x="2223" y="41" width="35.8" height="3.9" rx="0" fill="#fff"/><circle cx="2230.5" cy="36.6" r="2.3" fill="#fff"/><circle cx="2230.5" cy="49" r="2.3" fill="#fff"/><rect x="2239.3" y="56" width="3.8" height="10" rx="0" fill="#fff"/><rect x="2228.7" y="65.3" width="24.4" height="3.9" rx="0" fill="#fff"/><circle cx="2261" cy="29" r="12.1" fill="#67d8d8"/><path d="M2337,30.8 C2345.5,30.8 2348.6,37.5 2348.6,44 C2348.6,51 2350,54 2353.2,58 C2354.8,60 2353.6,62.5 2351,62.5 L2323,62.5 C2320.4,62.5 2319.2,60 2320.8,58 C2324,54 2325.4,51 2325.4,44 C2325.4,37.5 2328.5,30.8 2337,30.8Z" fill="none" stroke="#fff" stroke-width="4" stroke-linejoin="round"/><path d="M2330.3,64 A6.8,5.4 0 0 0 2343.7,64Z" fill="#fff" /><circle cx="2433" cy="32.4" r="3.4" fill="#fff"/><circle cx="2433" cy="49" r="3.4" fill="#fff"/><circle cx="2433" cy="65.7" r="3.4" fill="#fff"/><rect x="17" y="837" width="3" height="3" rx="0" fill="#c9c9c9"/><rect x="23.3" y="837" width="3" height="3" rx="0" fill="#c9c9c9"/><rect x="29.6" y="837" width="3" height="3" rx="0" fill="#c9c9c9"/><rect x="35.9" y="837" width="3" height="3" rx="0" fill="#c9c9c9"/><rect x="42.2" y="837" width="3" height="3" rx="0" fill="#c9c9c9"/><rect x="17" y="843.3" width="3" height="3" rx="0" fill="#c9c9c9"/><rect x="17" y="849.4" width="3" height="3" rx="0" fill="#c9c9c9"/><rect x="17" y="855.8" width="3" height="3" rx="0" fill="#c9c9c9"/><rect x="17" y="862" width="3" height="3" rx="0" fill="#c9c9c9"/><rect x="42.2" y="843.3" width="3" height="3" rx="0" fill="#c9c9c9"/><rect x="23.3" y="862" width="3" height="3" rx="0" fill="#c9c9c9"/><path d="M45.1,850.5 L30.4,850.5 L30.4,865" fill="none" stroke="#c9c9c9" stroke-width="3" /><path d="M31,851.2 L44.2,864" fill="none" stroke="#c9c9c9" stroke-width="3" /><path d="M101,840.4 L80.5,840.4 Q78.2,840.4 78.2,842.8 L78.2,859.5" fill="none" stroke="#c9c9c9" stroke-width="3.1" /><rect x="71" y="858.9" width="16.1" height="4.05" rx="0" fill="#c9c9c9"/><rect x="92.5" y="846.6" width="9.05" height="14.85" rx="2.2" fill="none" stroke="#c9c9c9" stroke-width="3"/><circle cx="31.05" cy="904.85" r="13.4" fill="none" stroke="#e0736c" stroke-width="3"/><rect x="25" y="899.3" width="12.2" height="11.8" rx="0.8" fill="#e0736c"/><circle cx="87" cy="904.85" r="13.4" fill="none" stroke="#c9c9c9" stroke-width="3"/><path d="M77.7,914.2 L96.3,895.5" fill="none" stroke="#c9c9c9" stroke-width="3" /><path d="M148.65,892.8 L173,892.8 L163.1,906.1 L163.1,915.5 Q163.1,917.1 161,917.1 Q158.9,917.1 158.9,915.5 L158.9,906.1Z" fill="#e0736c" /><circle cx="213.1" cy="900.9" r="8.5" fill="none" stroke="#c9c9c9" stroke-width="3"/><path d="M219.2,907.4 L229.5,917.8" fill="none" stroke="#c9c9c9" stroke-width="3" /><rect x="275" y="893" width="24" height="24" rx="4.5" fill="#7cacf8"/><path d="M279.6,906.4 L284.9,911.7 L294.3,897.9" fill="none" stroke="#303030" stroke-width="3.6" /><rect x="492" y="893" width="24" height="24" rx="4.5" fill="#7cacf8"/><path d="M496.6,906.4 L501.9,911.7 L511.3,897.9" fill="none" stroke="#303030" stroke-width="3.6" /><path d="M883,841 L895,841" fill="none" stroke="#c9c9c9" stroke-width="2.4" /><path d="M886.8,841 L886.8,850 L879.6,860.3 Q878.8,861.6 880.4,861.6 L897.8,861.6 Q899.4,861.6 898.6,860.3 L891.3,850 L891.3,841" fill="none" stroke="#c9c9c9" stroke-width="2.3" stroke-linejoin="round"/><path d="M893.1,900.2 L909,900.2 L901,911.4Z" fill="#c9c9c9" /><path d="M939.8,898.8 Q955.1,885.5 970.6,898.8" fill="none" stroke="#c9c9c9" stroke-width="2.6" /><path d="M945.6,904.6 Q955.1,896.5 964,901.8" fill="none" stroke="#c9c9c9" stroke-width="2.6" /><path d="M950.2,909.5 L956,907.4 L956,913.8Z" fill="#c9c9c9" /><path d="M963.19,906.94 L963.17,904.90 L965.43,904.90 L965.41,906.94 L966.67,907.46 L968.10,906.00 L969.70,907.60 L968.24,909.03 L968.76,910.29 L970.80,910.27 L970.80,912.53 L968.76,912.51 L968.24,913.77 L969.70,915.20 L968.10,916.80 L966.67,915.34 L965.41,915.86 L965.43,917.90 L963.17,917.90 L963.19,915.86 L961.93,915.34 L960.50,916.80 L958.90,915.20 L960.36,913.77 L959.84,912.51 L957.80,912.53 L957.80,910.27 L959.84,910.29 L960.36,909.03 L958.90,907.60 L960.50,906.00 L961.93,907.46Z M966.6,911.4 A2.3,2.3 0 1 0 962,911.4 A2.3,2.3 0 1 0 966.6,911.4Z" fill="#c9c9c9" fill-rule="evenodd" stroke="#c9c9c9" stroke-width="0.8" stroke-linejoin="round"/><path d="M1029.1,910.5 L1029.1,893 M1021.8,900.3 L1029.1,892.8 L1036.4,900.3" fill="none" stroke="#c9c9c9" stroke-width="2.8" /><path d="M1018.5,911.4 L1018.5,913.8 Q1018.5,915 1020,915 L1038.2,915 Q1039.7,915 1039.7,913.8 L1039.7,911.4" fill="none" stroke="#c9c9c9" stroke-width="2.8" /><path d="M1084.9,891 L1084.9,908.8 M1077.6,902 L1084.9,909.4 L1092.2,902" fill="none" stroke="#c9c9c9" stroke-width="2.8" /><path d="M1074.3,911.4 L1074.3,913.8 Q1074.3,915 1075.8,915 L1094.2,915 Q1095.7,915 1095.7,913.8 L1095.7,911.4" fill="none" stroke="#c9c9c9" stroke-width="2.8" /><path d="M1905.5,842 L1914.8,851.2 L1905.5,860.4 M1918,842 L1927.3,851.2 L1918,860.4" fill="none" stroke="#bdbdbd" stroke-width="2.6" /><circle cx="2118.95" cy="853" r="11.1" fill="#da716c"/><path d="M2114.3,848.4 L2123.7,857.7 M2123.7,848.4 L2114.3,857.7" fill="none" stroke="#3a3a3a" stroke-width="2" /><path d="M2177,842.3 L2189.6,862.8 L2164.6,862.8Z" fill="#ef9563" stroke="#ef9563" stroke-width="1" stroke-linejoin="round"/><rect x="2176" y="849.5" width="2.2" height="7" rx="0" fill="#3a3a3a"/><rect x="2176" y="858" width="2.2" height="2.2" rx="0" fill="#3a3a3a"/><path d="M2237.6,844.5 L2255.4,844.5 Q2256.8,844.5 2256.8,845.9 L2256.8,859.3 Q2256.8,860.7 2255.4,860.7 L2239.6,860.7 L2236.3,864 L2236.3,845.9 Q2236.3,844.5 2237.6,844.5Z" fill="#ef9563" /><rect x="2245.4" y="847.8" width="2.3" height="6.6" rx="0" fill="#3a3a3a"/><rect x="2245.4" y="856.2" width="2.3" height="2.3" rx="0" fill="#3a3a3a"/><path d="M2333.71,841.52 L2333.77,837.97 L2340.03,837.97 L2340.09,841.52 L2343.51,843.50 L2346.62,841.78 L2349.75,847.19 L2346.70,849.02 L2346.70,852.98 L2349.75,854.81 L2346.62,860.22 L2343.51,858.50 L2340.09,860.48 L2340.03,864.03 L2333.77,864.03 L2333.71,860.48 L2330.29,858.50 L2327.18,860.22 L2324.05,854.81 L2327.10,852.98 L2327.10,849.02 L2324.05,847.19 L2327.18,841.78 L2330.29,843.50Z" fill="none" stroke="#c9c9c9" stroke-width="2.9" stroke-linejoin="round"/><circle cx="2336.9" cy="851" r="5.2" fill="#c9c9c9"/><path d="M2441.71,895.52 L2441.77,891.97 L2448.03,891.97 L2448.09,895.52 L2451.51,897.50 L2454.62,895.78 L2457.75,901.19 L2454.70,903.02 L2454.70,906.98 L2457.75,908.81 L2454.62,914.22 L2451.51,912.50 L2448.09,914.48 L2448.03,918.03 L2441.77,918.03 L2441.71,914.48 L2438.29,912.50 L2435.18,914.22 L2432.05,908.81 L2435.10,906.98 L2435.10,903.02 L2432.05,901.19 L2435.18,895.78 L2438.29,897.50Z" fill="none" stroke="#c9c9c9" stroke-width="2.9" stroke-linejoin="round"/><circle cx="2444.9" cy="905" r="5.2" fill="#c9c9c9"/><circle cx="2393.1" cy="842" r="3.1" fill="#c9c9c9"/><circle cx="2393.1" cy="851" r="3.1" fill="#c9c9c9"/><circle cx="2393.1" cy="860" r="3.1" fill="#c9c9c9"/><path d="M2435.6,841.6 L2454.4,860.4 M2454.4,841.6 L2435.6,860.4" fill="none" stroke="#c9c9c9" stroke-width="2.8" /><path d="M32.2,950.6 L50,950.6 L41.1,959.8Z" fill="none" stroke="#c9c9c9" stroke-width="2.2" stroke-linejoin="miter"/><path d="M41.1,959 L41.1,968.8" fill="none" stroke="#c9c9c9" stroke-width="3.3" /><path d="M20.4,1263.3 L17.2,1263.3 Q14.6,1263.3 14.6,1266 L14.6,1269 Q14.6,1272 11.2,1272 Q14.6,1272 14.6,1275 L14.6,1278 Q14.6,1280.8 17.2,1280.8 L20.4,1280.8" fill="none" stroke="#f0955f" stroke-width="2.4" /><path d="M25.7,1263.3 L28.9,1263.3 Q31.5,1263.3 31.5,1266 L31.5,1269 Q31.5,1272 34.9,1272 Q31.5,1272 31.5,1275 L31.5,1278 Q31.5,1280.8 28.9,1280.8 L25.7,1280.8" fill="none" stroke="#f0955f" stroke-width="2.4" /><rect x="21.5" y="1266.1" width="3.3" height="3.3" rx="0" fill="#f0955f"/><rect x="21.5" y="1273.3" width="3.3" height="3.3" rx="0" fill="#f0955f"/><path d="M24.8,1276 Q24.8,1279.2 21.5,1279.8 L21.2,1278.5 Q23,1278 23.2,1276.5Z" fill="#f0955f" /><path d="M20.4,1305.3 L17.2,1305.3 Q14.6,1305.3 14.6,1308 L14.6,1311 Q14.6,1314 11.2,1314 Q14.6,1314 14.6,1317 L14.6,1320 Q14.6,1322.8 17.2,1322.8 L20.4,1322.8" fill="none" stroke="#f0955f" stroke-width="2.4" /><path d="M25.7,1305.3 L28.9,1305.3 Q31.5,1305.3 31.5,1308 L31.5,1311 Q31.5,1314 34.9,1314 Q31.5,1314 31.5,1317 L31.5,1320 Q31.5,1322.8 28.9,1322.8 L25.7,1322.8" fill="none" stroke="#f0955f" stroke-width="2.4" /><rect x="21.5" y="1308.1" width="3.3" height="3.3" rx="0" fill="#f0955f"/><rect x="21.5" y="1315.3" width="3.3" height="3.3" rx="0" fill="#f0955f"/><path d="M24.8,1318 Q24.8,1321.2 21.5,1321.8 L21.2,1320.5 Q23,1320 23.2,1318.5Z" fill="#f0955f" /><path d="M20.4,1347.3 L17.2,1347.3 Q14.6,1347.3 14.6,1350 L14.6,1353 Q14.6,1356 11.2,1356 Q14.6,1356 14.6,1359 L14.6,1362 Q14.6,1364.8 17.2,1364.8 L20.4,1364.8" fill="none" stroke="#f0955f" stroke-width="2.4" /><path d="M25.7,1347.3 L28.9,1347.3 Q31.5,1347.3 31.5,1350 L31.5,1353 Q31.5,1356 34.9,1356 Q31.5,1356 31.5,1359 L31.5,1362 Q31.5,1364.8 28.9,1364.8 L25.7,1364.8" fill="none" stroke="#f0955f" stroke-width="2.4" /><rect x="21.5" y="1350.1" width="3.3" height="3.3" rx="0" fill="#f0955f"/><rect x="21.5" y="1357.3" width="3.3" height="3.3" rx="0" fill="#f0955f"/><path d="M24.8,1360 Q24.8,1363.2 21.5,1363.8 L21.2,1362.5 Q23,1362 23.2,1360.5Z" fill="#f0955f" /><path d="M677.6,1213.7 L696.2,1232.3 M696.2,1213.7 L677.6,1232.3" fill="none" stroke="#c9c9c9" stroke-width="2.6" /><path d="M664,1276.8 L679.4,1276.8 L671.7,1287.7Z" fill="#c9c9c9" /><path d="M683.9,1322.4 L699.4,1322.4 L691.6,1333.6Z" fill="#c9c9c9" /><path d="M707.3,1422.5 L718,1430.2 L707.3,1438Z" fill="#c9c9c9" /></svg>
<div class="b" style="left:0;top:1377px;width:645px;height:24px;overflow:hidden;"><svg style="left:0;top:-1377px" width="2480" height="1454" viewBox="0 0 2480 1454"><path d="M20.4,1389.3 L17.2,1389.3 Q14.6,1389.3 14.6,1392 L14.6,1395 Q14.6,1398 11.2,1398 Q14.6,1398 14.6,1401 L14.6,1404" fill="none" stroke="#f0955f" stroke-width="2.4"/><path d="M25.7,1389.3 L28.9,1389.3 Q31.5,1389.3 31.5,1392 L31.5,1395 Q31.5,1398 34.9,1398 Q31.5,1398 31.5,1401 L31.5,1404" fill="none" stroke="#f0955f" stroke-width="2.4"/><rect x="21.5" y="1392.1" width="3.3" height="3.3" fill="#f0955f"/></svg></div>
<div class="t " style="left:502.40px;top:253.00px;font-size:10.8px;line-height:10.8px;color:#fff;font-family:'Liberation Sans',sans-serif;letter-spacing:-0.030px;-webkit-text-stroke:0.5px #fff;">Aa</div>
</body></html>
